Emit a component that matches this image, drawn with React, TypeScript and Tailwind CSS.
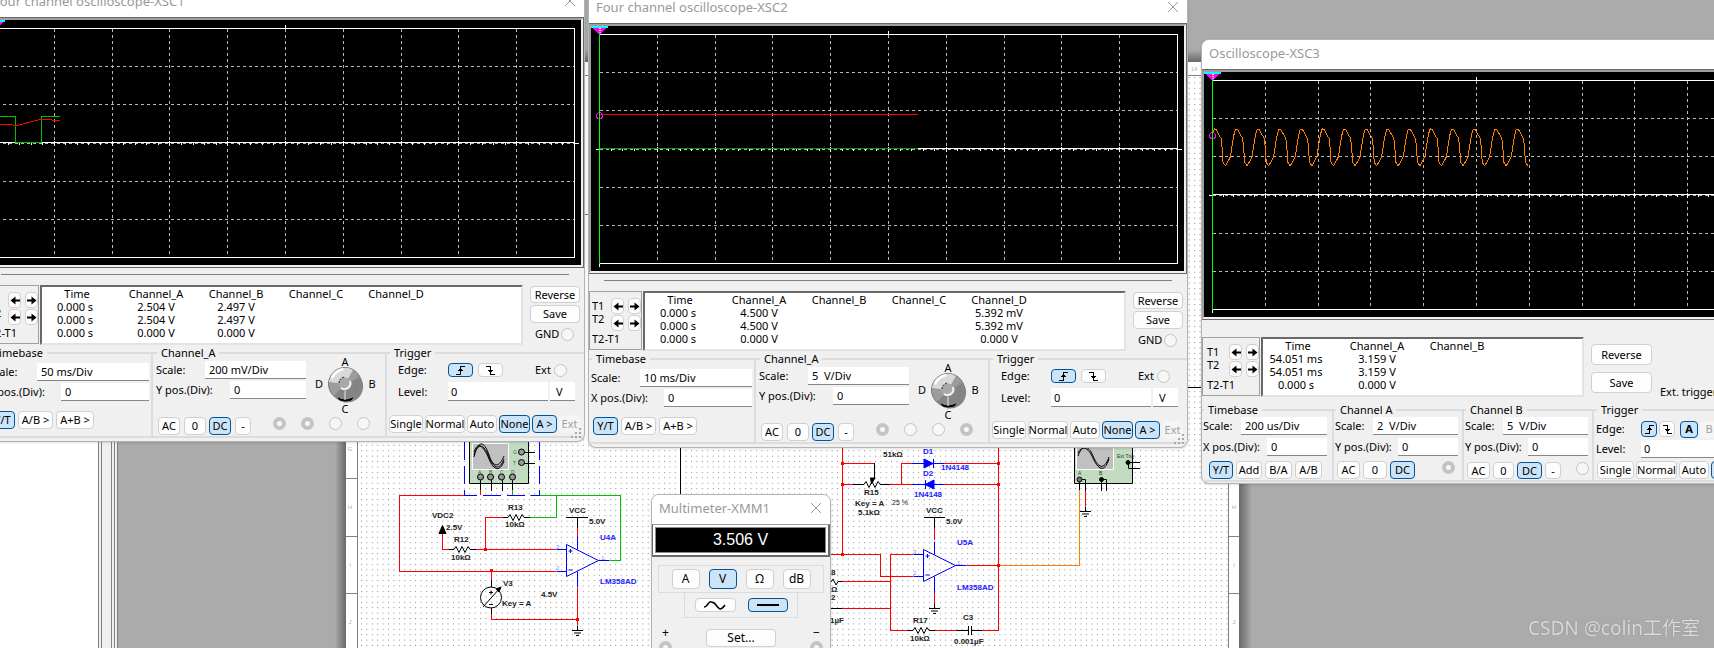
import type { ReactNode } from 'react'

const FONT = "font-['Noto_Sans','Noto_Sans_CJK_SC',sans-serif]"

// ---------- Window chrome ----------

function Window({ title, className, children }: { title: string; className: string; children: ReactNode }) {
  return (
    <section
      className={`absolute flex flex-col overflow-hidden rounded-lg border border-[#b4b4b4] bg-[#f0f0f0] shadow-sm ${className}`}
    >
      <header className="flex h-[29px] shrink-0 items-center justify-between bg-white pr-[7px] pb-[3px] pl-[7px]">
        <h2 className="text-[13px] leading-[16px] text-[#999999]">{title}</h2>
        <button type="button" aria-label="Close" className="flex size-[14px] items-center justify-center">
          <svg width="12" height="12" viewBox="0 0 12 12" stroke="#999" fill="none">
            <path d="M1 1 11 11M11 1 1 11" />
          </svg>
        </button>
      </header>
      {children}
    </section>
  )
}

function Btn({
  children,
  className = '',
  active = false,
  disabled = false,
  label,
}: {
  children: ReactNode
  className?: string
  active?: boolean
  disabled?: boolean
  label?: string
}) {
  const look = active
    ? 'border-[#005499] bg-[#cce4f7] text-black'
    : disabled
      ? 'border-[#f4f4f4] bg-[#f5f5f5] text-[#a0a0a0]'
      : 'border-[#d0d0d0] bg-[#fdfdfd] text-black'
  return (
    <button
      type="button"
      aria-label={label}
      disabled={disabled}
      className={`flex shrink-0 items-center justify-center rounded border whitespace-nowrap ${look} ${className}`}
    >
      {children}
    </button>
  )
}

function Field({ label, value, className = '' }: { label: string; value: string; className?: string }) {
  return (
    <label className="flex h-[18px] items-center justify-between whitespace-nowrap">
      <span>{label}</span>
      <input
        defaultValue={value}
        className={`h-[18px] min-w-0 border-b border-[#868686] bg-white px-[4px] outline-none ${className}`}
      />
    </label>
  )
}

function Radio({ checked = false, label, className = '' }: { checked?: boolean; label: string; className?: string }) {
  return (
    <input
      type="radio"
      aria-label={label}
      defaultChecked={checked}
      className={`size-[13px] shrink-0 appearance-none rounded-full border border-[#c4c4c4] bg-[#f7f7f7] checked:border-4 ${className}`}
    />
  )
}

function Group({ title, className = '', children }: { title: string; className?: string; children: ReactNode }) {
  return (
    <fieldset className={`min-w-0 shrink-0 border-y-2 border-[#dcdcdc] ${className}`}>
      <legend className="ml-px px-[4px] leading-[14px]">{title}</legend>
      {children}
    </fieldset>
  )
}

// ---------- Scope display ----------

function Display({
  width,
  div,
  children,
}: {
  width: number
  div: number
  children: ReactNode
}) {
  const x0 = 8.5
  const x1 = x0 + div * 10
  const cols = [1, 2, 3, 4, 5, 6, 7, 8, 9].map((i) => Math.round(div * i) + x0)
  const ticks = Array.from({ length: 49 }, (_, i) => Math.round((div * (i + 1)) / 5) + x0)
  return (
    <div className="-ml-px h-[251px] shrink-0 border border-[#696969] bg-white">
      <div className="h-[249px] border-2 border-t-[#a0a0a0] border-r-[#f0f0f0] border-b-[#f0f0f0] border-l-[#a0a0a0] bg-black">
        <svg width={width} height="245" viewBox={`0 0 ${width} 245`} fill="none" shapeRendering="crispEdges">
          <g stroke="#b8b8b8" strokeDasharray="3 3">
            {cols.map((x) => (
              <path key={x} d={`M${x} 9V237`} />
            ))}
            {[46.5, 84.5, 123.5, 161.5, 199.5].map((y) => (
              <path key={y} d={`M${x0} ${y}H${x1}`} />
            ))}
          </g>
          <g stroke="#fff">
            <path d={`M${x0} 8.5H${x1}V237.5H${x0}V241M${cols[4]} 5V9`} />
            <path d={`M${x0} 122.5H${x1}M5 123.5H9M${x1 - 1} 123.5H${x1 + 4}`} />
            {ticks.map((x, i) => (
              <path key={x} d={(i + 1) % 5 === 0 ? `M${x} 121V126` : `M${x} 123V125`} />
            ))}
          </g>
          {children}
          <path d="M8.5 8V238" stroke="#0f0" />
          <path d="M0 0H17V2H0z" fill="#0ff" />
          <path d="M1 2H16L9 8H8z" fill="#f0f" />
          <path d="M8 2h2v1h-2zM8 4h2v1h-2z" fill="#ff0" />
          <path d="M8 6h2v1h-2z" fill="#0ff" />
        </svg>
      </div>
    </div>
  )
}

const WAVE = [
  [0, 57], [1.7, 57.7], [4.5, 63], [6.5, 66.3], [7.5, 74.7], [8.5, 90.3], [10.9, 93.7],
  [12.5, 91.3], [16, 84.7], [17.7, 73], [19.4, 63], [21, 57.3],
]

function sineTrace() {
  const pts: string[] = []
  for (let p = 0; p < 15; p++) {
    for (const [dx, y] of WAVE) {
      const x = 10.5 + p * 21.6 + dx
      if (x <= 325) pts.push(`${x.toFixed(1)},${y}`)
    }
  }
  return `9,60 ${pts.join(' ')}`
}

// ---------- Readout ----------

function Arrow({ left = false }: { left?: boolean }) {
  return (
    <svg width="10" height="9" viewBox="0 0 10 9" fill="#000" className={left ? 'rotate-180' : ''}>
      <path d="M0 3.5H4.500V0.500L9.500 4.500 4.500 8.500V5.500H0z" />
    </svg>
  )
}

function Cursors({ className = '' }: { className?: string }) {
  return (
    <div
      className={`flex h-[59px] shrink-0 justify-between border border-[#a0a0a0] pt-[6px] ${className}`}
    >
      <div className="flex flex-col whitespace-nowrap">
        <span className="h-[14px] leading-[15px]">T1</span>
        <span className="h-[20px] leading-[14px]">T2</span>
        <span className="leading-[14px]">T2-T1</span>
      </div>
      <div className="-ml-4 grid h-[33px] grid-cols-2 gap-x-[4px] gap-y-px">
        {['T1 left', 'T1 right', 'T2 left', 'T2 right'].map((name, i) => (
          <Btn key={name} label={name} className="h-[16px] w-[13px]">
            <Arrow left={i % 2 === 0} />
          </Btn>
        ))}
      </div>
    </div>
  )
}

function Readout({ head, rows, className = '' }: { head: string[]; rows: string[][]; className?: string }) {
  return (
    <div
      className={`h-[60px] shrink-0 border-t-2 border-r-2 border-b-2 border-l-2 border-t-[#696969] border-r-[#e3e3e3] border-b-[#e3e3e3] border-l-[#696969] bg-white ${className}`}
    >
      <table className="table-fixed text-center leading-[13px] whitespace-nowrap">
        <thead>
          <tr>
            {head.map((h, i) => (
              <th key={h} className={i === 0 ? 'w-[74px] p-0 pr-[4px] font-normal' : 'w-[80px] p-0 font-normal'}>
                {h}
              </th>
            ))}
          </tr>
        </thead>
        <tbody>
          {rows.map((row, r) => (
            <tr key={r}>
              {row.map((c, i) => (
                <td key={i} className={i === 0 ? 'p-0 pr-[8px]' : 'p-0'}>
                  {c}
                </td>
              ))}
            </tr>
          ))}
        </tbody>
      </table>
    </div>
  )
}

function Rising() {
  return (
    <svg width="11" height="11" viewBox="0 0 11 11" fill="none" stroke="#000" shapeRendering="crispEdges">
      <path d="M1 9.500H5.500V1.500H10M3 5.500H8M4 4.500H7" />
    </svg>
  )
}

function Falling() {
  return (
    <svg width="11" height="11" viewBox="0 0 11 11" fill="none" stroke="#000" shapeRendering="crispEdges">
      <path d="M1 1.500H5.500V9.500H10M3 5.500H8M4 6.500H7" />
    </svg>
  )
}

function Knob() {
  return (
    <svg width="62" height="62" viewBox="0 0 62 62" className="-mt-[5px] shrink-0 text-[11px]">
      <circle cx="31" cy="29" r="16.500" fill="#9c9c9c" stroke="#777" />
      <path d="M15 27A16 16 0 0 1 39 15L31 29z" fill="#d9d9d9" />
      <path d="M17 22A16 16 0 0 1 29 13L30 15A15 15 0 0 0 19 24z" fill="#fff" />
      <path d="M31 29 46 22A16 16 0 0 1 20 41z" fill="#858585" />
      <path d="M24 43Q31 47 39 43L37 45Q31 47 26 45z" fill="#000" stroke="#000" />
      <path d="M31 36V45" stroke="#e8e8e8" />
      <circle cx="31" cy="29" r="6.500" fill="#a8a8a8" />
      <path d="M25 28A6 6 0 0 1 31 22" fill="none" stroke="#222" strokeDasharray="2 1" />
      <path d="M36 26A6 6 0 0 1 27 33" fill="none" stroke="#f2f2f2" strokeWidth="2" />
      <path d="M43 22V35" stroke="#77772a" strokeDasharray="1 3" />
      <g textAnchor="middle" fill="#000">
        <text x="31" y="11">A</text>
        <text x="58" y="33">B</text>
        <text x="31" y="58">C</text>
        <text x="5" y="33">D</text>
      </g>
    </svg>
  )
}

// ---------- Four channel oscilloscope ----------

function FourChannel({
  title,
  className,
  rows,
  timeScale,
  chanScale,
  channel,
  children,
}: {
  title: string
  className: string
  rows: string[][]
  timeScale: string
  chanScale: string
  channel: boolean[]
  children: ReactNode
}) {
  return (
    <Window title={title} className={`w-[600px] ${className}`}>
      <Display width={594} div={57.8}>
        {children}
      </Display>
      <hr className="mx-[15px] mt-[6px] mb-[10px] border-[#808080]" />
      <div className="flex">
        <Cursors className="w-[53px] pl-[2px]" />
        <Readout head={['Time', 'Channel_A', 'Channel_B', 'Channel_C', 'Channel_D']} rows={rows} className="ml-px w-[483px]" />
        <div className="ml-[7px] flex w-[50px] flex-col gap-[2px] pt-px">
          <Btn className="h-[17px]">Reverse</Btn>
          <Btn className="h-[18px]">Save</Btn>
          <label className="flex h-[18px] items-center justify-between pl-[5px]">
            GND <Radio label="GND" className="mr-[6px]" />
          </label>
        </div>
      </div>
      <div className="mt-px mb-[3px] flex h-[92px]">
        <Group title="Timebase" className="w-[167px] border-r-2 pl-[2px]">
          <div className="mt-[3px] flex flex-col gap-[2px] pr-[2px]">
            <Field label="Scale:" value={timeScale} className="w-[112px]" />
            <Field label="X pos.(Div):" value="0" className="w-[88px]" />
          </div>
          <div className="mt-[10px] flex h-[18px] gap-[3px] pl-[2px]">
            <Btn active className="w-[25px]">Y/T</Btn>
            <Btn className="w-[35px]">A/B &gt;</Btn>
            <Btn className="w-[38px]">A+B &gt;</Btn>
          </div>
        </Group>
        <Group title="Channel_A" className="w-[234px] border-r-2 pl-[3px]">
          <div className="flex h-[57px]">
            <div className="mt-px flex w-[150px] flex-col gap-[2px]">
              <Field label="Scale:" value={chanScale} className="w-[101px]" />
              <Field label="Y pos.(Div):" value="0" className="w-[76px]" />
            </div>
            <div className="ml-[8px]">
              <Knob />
            </div>
          </div>
          <div className="flex h-[18px] pl-[2px]">
            <Btn className="w-[22px]">AC</Btn>
            <Btn className="ml-[4px] w-[22px]">0</Btn>
            <Btn active className="ml-[3px] w-[22px]">DC</Btn>
            <Btn className="ml-[4px] w-[16px]">-</Btn>
            <div className="ml-[22px] flex gap-[15px]">
              {channel.map((on, i) => (
                <Radio key={i} label={`Channel ${i + 1}`} checked={on} />
              ))}
            </div>
          </div>
        </Group>
        <Group title="Trigger" className="flex-1 pl-[2px]">
          <div className="mt-[2px] flex h-[16px] items-center pl-[9px]">
            <span className="w-[50px]">Edge:</span>
            <Btn active label="Rising edge" className="h-[14px] w-[25px]">
              <Rising />
            </Btn>
            <Btn label="Falling edge" className="ml-[5px] h-[14px] w-[25px]">
              <Falling />
            </Btn>
            <label className="ml-[32px] flex items-center gap-[3px]">
              Ext <Radio label="Ext" />
            </label>
          </div>
          <div className="mt-[4px] flex h-[19px] items-center pl-[9px]">
            <label className="flex items-center">
              <span className="w-[50px]">Level:</span>
              <input defaultValue="0" className="h-[19px] w-[100px] border-b border-[#868686] bg-white px-[3px]" />
            </label>
            <input
              aria-label="Level unit"
              defaultValue="V"
              className="ml-[2px] h-[19px] w-[25px] border-b border-[#868686] bg-white px-[6px]"
            />
          </div>
          <div className="mt-[14px] flex h-[18px] gap-[2px]">
            <Btn className="w-[34px]">Single</Btn>
            <Btn className="w-[40px]">Normal</Btn>
            <Btn className="w-[30px]">Auto</Btn>
            <Btn active className="w-[31px]">None</Btn>
            <Btn active className="w-[25px]">A &gt;</Btn>
            <Btn disabled className="w-[21px]">Ext</Btn>
          </div>
        </Group>
      </div>
      {/* Resize grip */}
      <svg className="absolute right-[2px] bottom-[2px]" width="11" height="11" viewBox="0 0 11 11" fill="#a8a8a8">
        <path d="M8 0h2v2h-2zM4 4h2v2h-2zM8 4h2v2h-2zM0 8h2v2h-2zM4 8h2v2h-2zM8 8h2v2h-2z" />
      </svg>
    </Window>
  )
}

// ---------- Two channel oscilloscope ----------

function TwoChannel() {
  return (
    <Window title="Oscilloscope-XSC3" className="top-[39px] left-[1201px] w-[551px]">
      <Display width={545} div={52.8}>
        <polyline points={sineTrace()} stroke="#ff8000" />
        <circle cx="8.500" cy="63.500" r="3" stroke="#f0f" />
      </Display>
      <div className="mt-[17px] flex">
        <Cursors className="w-[58px] pl-[4px]" />
        <Readout
          head={['Time', 'Channel_A', 'Channel_B']}
          rows={[
            ['54.051 ms', '3.159 V', ''],
            ['54.051 ms', '3.159 V', ''],
            ['0.000 s', '0.000 V', ''],
          ]}
          className="ml-px w-[323px]"
        />
        <div className="ml-[7px] flex w-[61px] flex-col gap-[7px] pt-[7px]">
          <Btn className="h-[21px]">Reverse</Btn>
          <Btn className="h-[21px]">Save</Btn>
        </div>
        <span className="mt-[48px] ml-[8px] leading-[14px] whitespace-nowrap">Ext. trigger</span>
      </div>
      <div className="mt-[4px] mb-px flex h-[79px]">
        <Group title="Timebase" className="w-[132px] border-r-2 pl-px">
          <div className="flex flex-col gap-[3px] pr-[5px]">
            <Field label="Scale:" value="200 us/Div" className="w-[86px]" />
            <Field label="X pos.(Div):" value="0" className="w-[60px]" />
          </div>
          <div className="mt-[5px] flex h-[18px] gap-[3px] pl-[6px]">
            <Btn active className="w-[24px]">Y/T</Btn>
            <Btn className="w-[26px]">Add</Btn>
            <Btn className="w-[27px]">B/A</Btn>
            <Btn className="w-[27px]">A/B</Btn>
          </div>
        </Group>
        <Group title="Channel A" className="w-[130px] border-r-2 pl-px">
          <div className="flex flex-col gap-[3px] pr-[4px]">
            <Field label="Scale:" value="2  V/Div" className="w-[85px]" />
            <Field label="Y pos.(Div):" value="0" className="w-[60px]" />
          </div>
          <div className="mt-[5px] flex h-[18px] gap-[3px] pl-[2px]">
            <Btn className="w-[23px]">AC</Btn>
            <Btn className="w-[24px]">0</Btn>
            <Btn active className="w-[25px]">DC</Btn>
            <Radio label="Channel A input" checked className="ml-[24px]" />
          </div>
        </Group>
        <Group title="Channel B" className="w-[130px] border-r-2 pl-px">
          <div className="flex flex-col gap-[3px] pr-[4px]">
            <Field label="Scale:" value="5  V/Div" className="w-[85px]" />
            <Field label="Y pos.(Div):" value="0" className="w-[60px]" />
          </div>
          <div className="mt-[6px] flex h-[17px] gap-[3px] pl-[2px]">
            <Btn className="w-[23px]">AC</Btn>
            <Btn className="w-[21px]">0</Btn>
            <Btn active className="w-[25px]">DC</Btn>
            <Btn className="w-[16px]">-</Btn>
            <Radio label="Channel B input" className="ml-[12px]" />
          </div>
        </Group>
        <Group title="Trigger" className="flex-1 pl-[2px]">
          <div className="flex h-[21px] items-center pt-[3px]">
            <span className="w-[45px]">Edge:</span>
            <Btn active label="Rising edge" className="h-[16px] w-[16px]">
              <Rising />
            </Btn>
            <Btn label="Falling edge" className="ml-[2px] h-[16px] w-[16px]">
              <Falling />
            </Btn>
            <Btn active className="ml-[5px] h-[17px] w-[18px] font-bold">A</Btn>
            <Btn disabled className="ml-[2px] h-[17px] w-[18px]">B</Btn>
          </div>
          <label className="mt-[2px] flex h-[18px] items-center">
            <span className="w-[45px]">Level:</span>
            <input defaultValue="0" className="h-[18px] w-[80px] border-b border-[#868686] bg-white px-[3px]" />
          </label>
          <div className="mt-[3px] flex h-[18px] gap-[2px] pl-px">
            <Btn className="w-[37px]">Single</Btn>
            <Btn className="w-[41px]">Normal</Btn>
            <Btn className="w-[30px]">Auto</Btn>
            <Btn active className="w-[34px]">None</Btn>
          </div>
        </Group>
      </div>
    </Window>
  )
}

// ---------- Multimeter ----------

function Multimeter() {
  return (
    <Window title="Multimeter-XMM1" className="top-[494px] left-[651px] h-[170px] w-[180px]">
      <div className="h-[33px] shrink-0 border border-r-2 border-b-2 border-[#696969] border-t-[#a0a0a0] bg-white p-[2px]">
        <output className="flex h-full items-center justify-center border border-[#888] bg-black font-['Liberation_Sans',sans-serif] text-[16px] text-white">
          3.506 V
        </output>
      </div>
      <div className="flex flex-col items-center pt-[8px] text-[12px]">
        <div className="flex h-[28px] w-[166px] items-center justify-center gap-[9px] border border-[#dcdcdc]">
          <Btn className="h-[20px] w-[28px]">A</Btn>
          <Btn active className="h-[20px] w-[28px]">V</Btn>
          <Btn className="h-[20px] w-[28px]">Ω</Btn>
          <Btn className="h-[20px] w-[28px]">dB</Btn>
        </div>
        <div className="-mt-px flex h-[26px] w-[114px] items-center justify-center gap-[12px] border border-[#dcdcdc]">
          <Btn label="AC" className="h-[14px] w-[41px]">
            <svg width="22" height="9" viewBox="0 0 22 9" fill="none" stroke="#000" strokeWidth="1.500">
              <path d="M0 6Q2 6 4 3T7 1Q10 1 12 4T16 8Q18 8 21 4" />
            </svg>
          </Btn>
          <Btn active label="DC" className="h-[14px] w-[40px]">
            <svg width="22" height="2" viewBox="0 0 22 2">
              <path d="M0 0H22V2H0z" fill="#000" />
            </svg>
          </Btn>
        </div>
      </div>
      <div className="mt-[7px] flex items-start justify-between px-[7px] text-[12px]">
        <div className="flex flex-col items-center">
          <span className="leading-[16px]">+</span>
          <Radio label="Positive" checked />
        </div>
        <Btn className="mt-[4px] h-[18px] w-[70px]">Set...</Btn>
        <div className="flex flex-col items-center">
          <span className="leading-[16px]">−</span>
          <Radio label="Negative" checked />
        </div>
      </div>
    </Window>
  )
}

// ---------- Schematic sheet ----------

function Resistor({ x, y }: { x: number; y: number }) {
  return <path d={`M${x - 5} ${y}h5l2 -3 3 6 3 -6 3 6 3 -6 2 3h6`} stroke="#000" fill="none" />
}

function Ground({ x, y }: { x: number; y: number }) {
  return <path d={`M${x} ${y - 5}v5M${x - 5.5} ${y}h11M${x - 3.5} ${y + 2.5}h7M${x - 1.5} ${y + 5}h3`} stroke="#000" />
}

function OpAmp({ x, y }: { x: number; y: number }) {
  return (
    <g stroke="#00f" fill="none">
      <path d={`M${x} ${y - 16}L${x + 32} ${y} ${x} ${y + 16}z`} />
      <path d={`M${x - 10} ${y - 11}h10M${x - 10} ${y + 11}h10M${x + 32} ${y}h11M${x + 11} ${y - 24}v13M${x + 11} ${y + 11}v16`} />
      <path d={`M${x + 2} ${y - 9.5}h4M${x + 4} ${y - 11.5}v4M${x + 2} ${y + 9.5}h4`} />
    </g>
  )
}

function Sheet() {
  const rulerRows = [
    [449, 'G'],
    [507, 'H'],
    [565, 'I'],
    [622, 'J'],
  ] as const
  return (
    <svg
      className="absolute inset-0 font-['Liberation_Sans',sans-serif]"
      width="1714"
      height="648"
      viewBox="0 0 1714 648"
      fill="none"
      strokeWidth="1"
    >
      <defs>
        <pattern id="dots" x="361" y="77" width="5.41" height="5.41" patternUnits="userSpaceOnUse">
          <rect width="1" height="1" fill="#8c8c8c" />
        </pattern>
        <linearGradient id="fadeL">
          <stop offset="0" stopColor="#ababab" />
          <stop offset="1" stopColor="#686868" />
        </linearGradient>
        <linearGradient id="fadeR">
          <stop offset="0" stopColor="#686868" />
          <stop offset="1" stopColor="#ababab" />
        </linearGradient>
        <linearGradient id="fadeT" x2="0" y2="1">
          <stop offset="0" stopColor="#ababab" />
          <stop offset="1" stopColor="#686868" />
        </linearGradient>
      </defs>

      <path d="M335 62h11v586h-11z" fill="url(#fadeL)" />
      <path d="M1239 62h13v586h-13z" fill="url(#fadeR)" />
      <path d="M346 50h893v12H346z" fill="url(#fadeT)" />
      <path d="M346 62h893v586H346z" fill="#fff" />
      <path d="M358 76h870v572H358z" fill="url(#dots)" />
      <path d="M357.500 648V75.500H1228.500V648" stroke="#808080" />
      {[478.5, 536.5, 593.5].map((y) => (
        <path key={y} d={`M346 ${y}h11M1229 ${y}h10`} stroke="#808080" />
      ))}
      <g fill="#b0b0b0" fontSize="6" textAnchor="middle">
        {rulerRows.map(([y, t]) => (
          <text key={t} x="350" y={y + 2}>{t}</text>
        ))}
        {rulerRows.map(([y, t]) => (
          <text key={t} x="1234" y={y + 2}>{t}</text>
        ))}
        <text x="1194" y="71">14</text>
      </g>

      {/* Wires */}
      <g shapeRendering="crispEdges">
        <path
          stroke="#f00"
          d="M480.500 490v5M464 495.500H399.500V571.500H556M491.500 571v9M491.500 614V619.500H577.500M577.500 588V625M442.500 533v16.500h7M476 549.500h80M485.500 549V517.500H503M577.500 528v9"
        />
        <path
          stroke="#f00"
          d="M842.500 448V554M842 463.500h32M842 484.500h11M890 484.500h22M901.500 484v-21h12M944 463.500h54M944 484.500h54M998.500 448V630.500H982M831 554.500H880.500V576.500H913M913 554.500H890.500V630.500H908M842 581.500h49M842 608.500h49M935 630.500h22M934.500 528v12M934.500 592v12M967 565.500h31M1085.500 491v15"
        />
        <path stroke="#00c000" d="M512.500 490v5M530 495.500H620.500V560.500H610M556.500 495V517.500H528M585 214.500h3" />
        <path stroke="#ff8000" d="M999 565.500H1079.500V490" />
        <path stroke="#00f" strokeDasharray="18 6" d="M464.500 442V495.500H540M539.500 442V495" />
        <path stroke="#000" d="M680.500 448v46M1188 387.500h13M566 517.500h22M577.500 517v11M924 517.500h21M934.500 517v11M874.500 463v15M491.500 580v7M491.500 608v6M442.500 528v5M831 608.500h11M830.500 603v11M957 630.500h11M971 630.500h11M968.500 626v9M971.500 626v9" />
        <path stroke="#00f" d="M912 463.500h32M912 484.500h32M933.500 459v9M925.500 480v9" />
      </g>
      {/* Junctions */}
      <path
        d="M484 548h3v3h-3zM490 569h3v3h-3zM576 618h3v3h-3zM841 462h3v3h-3zM841 483h3v3h-3zM841 553h3v3h-3zM997 462h3v3h-3zM997 483h3v3h-3zM997 564h3v3h-3z"
        fill="#f00"
      />
      <path d="M924 459v9l9 -4.500zM934 480v9l-9 -4.500z" fill="#00f" stroke="#00f" />
      <path d="M875 478l-3.500 6 -1 -6z M439 533.500l3.500 -8 3.500 8z" fill="#000" stroke="#000" />
      <Resistor x={508} y={517.5} />
      <Resistor x={454} y={549.5} />
      <path d="M470 549.500h6" stroke="#000" />
      <Resistor x={864} y={484.5} />
      <path d="M853 484.500h8M880 484.500h10" stroke="#000" />
      <Resistor x={913} y={630.5} />
      <path d="M831 582l2 -3 3 6 2 -3.500h4" stroke="#000" />
      <OpAmp x={566.5} y={560.5} />
      <OpAmp x={923.5} y={565.5} />
      <Ground x={577.5} y={630.5} />
      <Ground x={934.5} y={608.5} />
      <Ground x={1085.5} y={511.5} />

      {/* Variable source */}
      <circle cx="491" cy="597.500" r="10.500" stroke="#000" />
      <path d="M483 607 500 588M489 592.500h4M491 590.500v4M489 604.500h4" stroke="#000" />
      <path d="M501 587l-2 5 -3 -3z" fill="#000" stroke="#000" />

      {/* Four channel instrument */}
      <path d="M469.500 440h59v43.500h-59z" fill="#c1dcc1" stroke="#000" />
      <path d="M472.500 443.500h36v26h-36z" fill="#c0c0c0" stroke="#fff" />
      <g stroke="#000">
        <path d="M474 457C478 440 484 440 489 455S500 466 504 456" />
        <path d="M474 455C478 442 484 444 489 457S500 470 504 459" />
        <path d="M474 452C478 440 484 447 489 459S500 472 504 461" />
        <path d="M480.500 479v11M491.500 479v12M502.500 479v12M512.500 479v11M521 452.500h14M521 463.500h14" />
        <g fill="#999">
          <circle cx="480.500" cy="477" r="3" />
          <circle cx="490.500" cy="477" r="3" />
          <circle cx="501.500" cy="477" r="3" />
          <circle cx="512.500" cy="477" r="3" />
          <circle cx="521.500" cy="452" r="3" />
          <circle cx="521.500" cy="462.500" r="3" />
        </g>
      </g>
      <g fill="#555" fontSize="5">
        <text x="478" y="474">A</text>
        <text x="489" y="474">B</text>
        <text x="500" y="474">C</text>
        <text x="511" y="474">D</text>
        <text x="513" y="454">G</text>
        <text x="513" y="465">T</text>
      </g>

      {/* Two channel instrument */}
      <path d="M1074.500 440h58v43.500h-58z" fill="#c1dcc1" stroke="#000" />
      <path d="M1076.500 443.500h37v26h-37z" fill="#c0c0c0" stroke="#fff" />
      <g stroke="#000">
        <path d="M1078 456C1082 445 1088 444 1093 456S1104 471 1109 457" />
        <path d="M1078 453C1082 445 1088 447 1093 458S1104 474 1109 459" />
        <path d="M1079.500 480v10M1080 479.500h5.500V491M1101.500 480v11M1101 479.500h5.500V491M1128 462.500h12M1128.500 463v5.500H1140" />
        <circle cx="1079.500" cy="479.500" r="2.500" fill="#777" />
        <circle cx="1101.500" cy="479.500" r="2" fill="#000" />
        <circle cx="1128" cy="462.500" r="2" fill="#000" />
      </g>
      <g fill="#333" fontSize="5">
        <text x="1078" y="475">A</text>
        <text x="1099" y="475">B</text>
        <text x="1117" y="458">Ext Trig</text>
      </g>

      {/* Part labels */}
      <g fill="#222" fontSize="8" fontWeight="bold">
        <text x="508" y="510">R13</text>
        <text x="505" y="527">10kΩ</text>
        <text x="432" y="518">VDC2</text>
        <text x="446" y="530">2.5V</text>
        <text x="454" y="542">R12</text>
        <text x="451" y="560">10kΩ</text>
        <text x="569" y="513">VCC</text>
        <text x="589" y="524">5.0V</text>
        <text x="503" y="586">V3</text>
        <text x="502" y="606">Key = A</text>
        <text x="541" y="597">4.5V</text>
        <text x="883" y="457">51kΩ</text>
        <text x="864" y="495">R15</text>
        <text x="855" y="506">Key = A</text>
        <text x="858" y="515">5.1kΩ</text>
        <text x="926" y="513">VCC</text>
        <text x="946" y="524">5.0V</text>
        <text x="831" y="575">8</text>
        <text x="831" y="592">Ω</text>
        <text x="831" y="600">2</text>
        <text x="830" y="623">1µF</text>
        <text x="913" y="623">R17</text>
        <text x="910" y="641">10kΩ</text>
        <text x="963" y="620">C3</text>
        <text x="954" y="644">0.001µF</text>
      </g>
      <text x="892" y="505" fill="#222" fontSize="7">25 %</text>
      <g fill="#22f" fontSize="8" fontWeight="bold">
        <text x="600" y="540">U4A</text>
        <text x="600" y="584">LM358AD</text>
        <text x="923" y="454">D1</text>
        <text x="923" y="476">D2</text>
        <text x="941" y="470">1N4148</text>
        <text x="914" y="497">1N4148</text>
        <text x="957" y="545">U5A</text>
        <text x="957" y="590">LM358AD</text>
      </g>
      <g fill="#88f" fontSize="6">
        <text x="556" y="549">3</text>
        <text x="556" y="570">2</text>
        <text x="601" y="560">1</text>
        <text x="913" y="554">3</text>
        <text x="913" y="575">2</text>
        <text x="957" y="565">1</text>
      </g>
    </svg>
  )
}

export default function App() {
  return (
    <main className={`relative h-screen w-full overflow-hidden bg-[#ababab] text-[11px] leading-[14px] text-black ${FONT}`}>
      {/* Docked side panel */}
      <aside className="flex h-full w-[118px] bg-[#f0f0f0]">
        <div className="w-[99px] border-r border-[#808080] bg-white" />
        <div className="ml-[2px] w-[11px] border-x border-[#808080] bg-[#f0f0f0]" />
        <div className="ml-[2px] flex-1 border-x border-[#808080] bg-[#f0f0f0]" />
      </aside>
      <Sheet />

      <FourChannel
        title="Four channel oscilloscope-XSC1"
        className="top-[-13px] left-[-15px]"
        timeScale="50 ms/Div"
        chanScale="200 mV/Div"
        channel={[true, true, false, false]}
        rows={[
          ['0.000 s', '2.504 V', '2.497 V', '', ''],
          ['0.000 s', '2.504 V', '2.497 V', '', ''],
          ['0.000 s', '0.000 V', '0.000 V', '', ''],
        ]}
      >
        <path d="M9 96.500H27.500V122.500H53.500V96.500H72" stroke="#00c000" />
        <path d="M9 104.500H20L29 105.500 52 99.500H62L66 100.500H72" stroke="#f00" />
      </FourChannel>

      <FourChannel
        title="Four channel oscilloscope-XSC2"
        className="top-[-7px] left-[588px]"
        timeScale="10 ms/Div"
        chanScale="5  V/Div"
        channel={[true, false, false, true]}
        rows={[
          ['0.000 s', '4.500 V', '', '', '5.392 mV'],
          ['0.000 s', '4.500 V', '', '', '5.392 mV'],
          ['0.000 s', '0.000 V', '', '', '0.000 V'],
        ]}
      >
        <path d="M9 88.500H327" stroke="#f00" />
        <path d="M9 122.500H327" stroke="#00a000" />
        <circle cx="8.500" cy="89.500" r="3" stroke="#f0f" />
      </FourChannel>

      <TwoChannel />
      <Multimeter />

      <p className="absolute right-[14px] bottom-[8px] text-[19px] leading-[24px] text-[#dcdcdc] [text-shadow:0_0_1px_#707070]">
        CSDN @colin工作室
      </p>
    </main>
  )
}
